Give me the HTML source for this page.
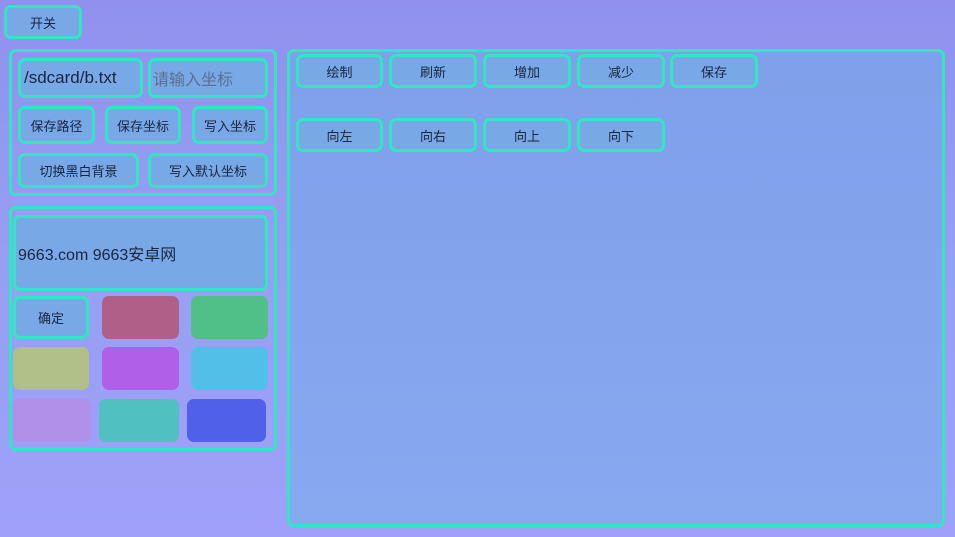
<!DOCTYPE html>
<html><head><meta charset="utf-8"><style>
*{margin:0;padding:0;box-sizing:border-box}
body{width:955px;height:537px;overflow:hidden;position:relative;background:linear-gradient(180deg,#9190ef 0%,#96a0f2 50%,#a0a0fa 100%);font-family:"Liberation Sans","Noto Sans CJK SC",sans-serif;color:#1a2540}
.b{position:absolute;border:3px solid #2ee8c2;border-radius:7px;background:#78a8e6;display:flex;align-items:center;justify-content:center;font-size:13px}
.p{position:absolute;border:3px solid #2ee8c2;border-radius:7px}
.c{position:absolute;border-radius:7px}
</style></head><body>
<div class="b" style="left:4px;top:5px;width:78px;height:34px">开关</div>
<div class="p" style="left:9px;top:49px;width:268px;height:147px"></div>
<div class="b" style="left:18px;top:58px;width:125px;height:40px;justify-content:flex-start;padding-left:3px;font-size:17px">/sdcard/b.txt</div>
<div class="b" style="left:148px;top:58px;width:120px;height:40px;justify-content:flex-start;padding-left:2px;font-size:16px;color:#5a7090">请输入坐标</div>
<div class="b" style="left:18px;top:106px;width:77px;height:38px">保存路径</div>
<div class="b" style="left:105px;top:106px;width:76px;height:38px">保存坐标</div>
<div class="b" style="left:192px;top:106px;width:76px;height:38px">写入坐标</div>
<div class="b" style="left:18px;top:153px;width:121px;height:35px">切换黑白背景</div>
<div class="b" style="left:148px;top:153px;width:120px;height:35px">写入默认坐标</div>
<div class="p" style="left:9px;top:206px;width:268px;height:245px"></div>
<div class="b" style="left:13px;top:215px;width:255px;height:76px;justify-content:flex-start;padding-left:2px;font-size:16px">9663.com 9663安卓网</div>
<div class="b" style="left:13px;top:296px;width:76px;height:43px">确定</div>
<div class="c" style="left:102px;top:296px;width:77px;height:43px;background:#b06088"></div>
<div class="c" style="left:191px;top:296px;width:77px;height:43px;background:#50c088"></div>
<div class="c" style="left:13px;top:347px;width:76px;height:43px;background:#b0c088"></div>
<div class="c" style="left:102px;top:347px;width:77px;height:43px;background:#b060e8"></div>
<div class="c" style="left:191px;top:347px;width:77px;height:43px;background:#50c0e8"></div>
<div class="c" style="left:13px;top:399px;width:78px;height:43px;background:#b090e8"></div>
<div class="c" style="left:99px;top:399px;width:80px;height:43px;background:#50c0c0"></div>
<div class="c" style="left:187px;top:399px;width:79px;height:43px;background:#5060e8"></div>
<div class="p" style="left:287px;top:49px;width:658px;height:478px;background:linear-gradient(180deg,#7fa0ea,#88a8f0)"></div>
<div class="b" style="left:296px;top:54px;width:87px;height:34px">绘制</div>
<div class="b" style="left:389px;top:54px;width:88px;height:34px">刷新</div>
<div class="b" style="left:483px;top:54px;width:88px;height:34px">增加</div>
<div class="b" style="left:577px;top:54px;width:88px;height:34px">减少</div>
<div class="b" style="left:670px;top:54px;width:88px;height:34px">保存</div>
<div class="b" style="left:296px;top:118px;width:87px;height:34px">向左</div>
<div class="b" style="left:389px;top:118px;width:88px;height:34px">向右</div>
<div class="b" style="left:483px;top:118px;width:88px;height:34px">向上</div>
<div class="b" style="left:577px;top:118px;width:88px;height:34px">向下</div>
</body></html>
